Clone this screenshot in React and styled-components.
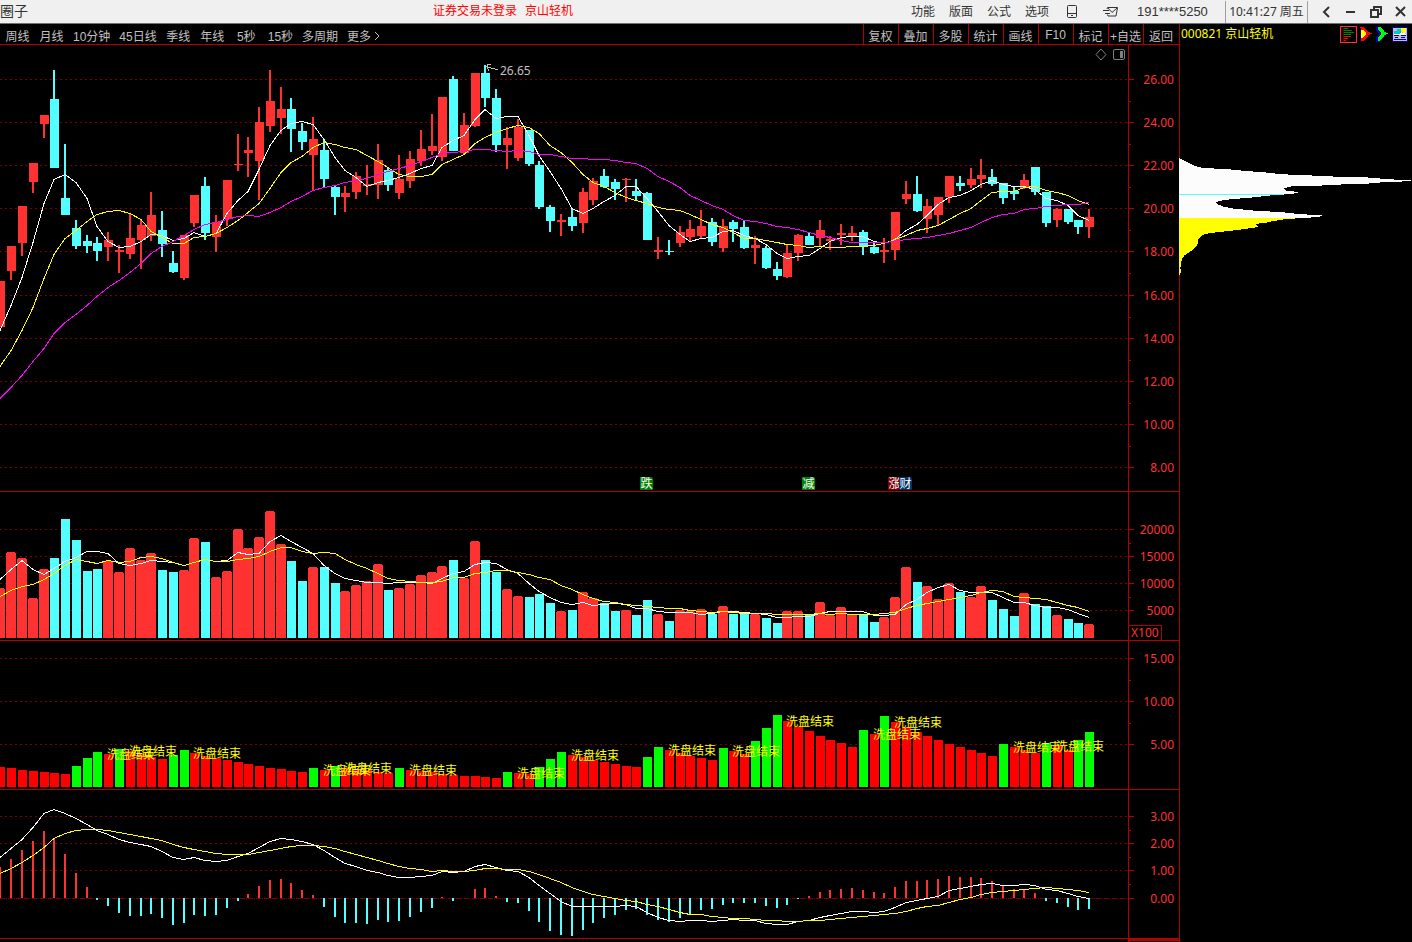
import React from "react";
import styled, { createGlobalStyle } from "styled-components";

const GlobalStyle = createGlobalStyle`
  * {
    box-sizing: border-box;
  }
  body {
    margin: 0;
    background: #000;
    font-family: "Noto Sans", "Noto Sans CJK SC", sans-serif;
    font-size: 12px;
  }
  button {
    margin: 0;
    padding: 0;
    border: 0;
    background: none;
    color: inherit;
    font: inherit;
    white-space: nowrap;
    cursor: pointer;
  }
`;

const Page = styled.div`
  display: flex;
  flex-direction: column;
  height: 100vh;
  min-height: 600px;
  overflow: hidden;
`;
const TitleBar = styled.header`
  display: grid;
  grid-template-columns: 1fr auto 1fr;
  flex: none;
  height: 24px;
  line-height: 22px;
  color: #333;
  background: #f0f0f0;
  border-bottom: 1px solid #707070;
`;
const AppName = styled.span`
  font-size: 14px;
`;
const LoginState = styled.span`
  display: flex;
  gap: 8px;
  margin-right: 338px;
  color: #ff0000;
`;
const TitleRight = styled.div`
  display: flex;
  justify-content: flex-end;
  align-items: center;
`;
const Menu = styled.nav`
  display: flex;
  align-items: center;
  gap: 14px;
  svg {
    display: block;
  }
`;
const MenuIcons = styled.div`
  display: flex;
  align-items: center;
  gap: 26px;
  margin: 0 19px 0 18px;
`;
const Account = styled.span`
  width: 88px;
  font-family: "Liberation Sans", sans-serif;
  font-size: 13px;
`;
const Clock = styled.time`
  width: 83px;
  height: 22px;
  text-align: center;
  white-space: nowrap;
  border-left: 1px solid #a0a0a0;
  border-right: 1px solid #a0a0a0;
`;
const WindowButtons = styled.div`
  display: flex;
  gap: 9px;
  padding: 0 3px 0 10px;
  button {
    width: 16px;
    height: 16px;
  }
  svg {
    display: block;
  }
`;

const Body = styled.div`
  display: grid;
  grid-template-columns: minmax(0, 1fr) 233px;
  flex: 1;
  min-height: 0;
`;
const Main = styled.main`
  display: flex;
  flex-direction: column;
  min-width: 0;
  min-height: 0;
`;
const Toolbar = styled.div`
  display: flex;
  justify-content: space-between;
  flex: none;
  height: 21px;
  color: #c0c0c0;
  font-family: "Liberation Sans", "Noto Sans CJK SC", sans-serif;
  border-bottom: 1px solid #b00000;
`;
const Periods = styled.div`
  display: flex;
  gap: 9px;
  padding-left: 5px;
  button {
    min-width: 25px;
    padding-top: 2px;
  }
`;
const Tools = styled.div`
  display: flex;
  button {
    width: 35px;
    padding: 2px 1px 0 0;
    border-left: 1px solid #b00000;
  }
  button:last-child {
    width: 36px;
  }
`;

const Charts = styled.div`
  display: grid;
  grid-template-rows: 447fr 149fr 149fr 149fr 3px;
  flex: 1;
  min-height: 0;
`;
const Panel = styled.section`
  display: grid;
  grid-template-columns: minmax(0, 1fr) 51px;
  min-height: 0;
  border-bottom: 1px solid #b00000;
`;
const PlotArea = styled.div`
  position: relative;
  min-width: 0;
  min-height: 0;
  overflow: hidden;
`;
const AxisArea = styled.div`
  position: relative;
  min-height: 0;
  color: #ff3232;
  border-left: 1px solid #b00000;
`;
const Canvas = styled.svg`
  position: absolute;
  inset: 0;
  display: block;
  width: 100%;
  height: 100%;
  shape-rendering: crispEdges;
`;
const AxisLabel = styled.span`
  position: absolute;
  right: 5px;
  line-height: 16px;
  margin-top: -8px;
`;
const Unit = styled.span`
  position: absolute;
  left: 0;
  bottom: 0;
  width: 33px;
  height: 15px;
  padding-left: 2px;
  line-height: 14px;
  border-top: 1px solid #b00000;
  border-right: 1px solid #b00000;
`;
const Signal = styled.span`
  position: absolute;
  margin-top: -7px;
  line-height: 16px;
  color: #ffff00;
  white-space: nowrap;
`;
const PeakLabel = styled(Signal)`
  margin-top: -8px;
  color: #c0c0c0;
`;
const EventMark = styled.span`
  position: absolute;
  bottom: 1px;
  width: 13px;
  height: 13px;
  margin-left: -7px;
  line-height: 14px;
  text-align: center;
  color: #fff;
  background: ${(props) => props.$color};
  border-top-right-radius: 2px;
`;
const PlotTools = styled.div`
  position: absolute;
  top: 3px;
  right: 3px;
  display: flex;
  gap: 6px;
  svg {
    display: block;
  }
`;
const Foot = styled.div`
  display: grid;
  grid-template-columns: minmax(0, 1fr) 51px;
  div {
    border-left: 2px solid #b00000;
    border-top: 2px solid #b00000;
  }
`;

const Side = styled.aside`
  display: flex;
  flex-direction: column;
  min-height: 0;
  color: #ffff00;
  box-shadow: inset 1px 0 #b00000;
`;
const SideHead = styled.div`
  display: flex;
  justify-content: space-between;
  flex: none;
  height: 21px;
  padding: 0 4px 0 2px;
  line-height: 19px;
`;
const Stock = styled.span`
  display: flex;
  gap: 3px;
  white-space: nowrap;
`;
const SideIcons = styled.div`
  display: flex;
  align-items: center;
  gap: 3px;
  svg {
    display: block;
  }
`;
const Chips = styled.svg`
  display: block;
  width: 100%;
  height: 130px;
  margin-top: 105px;
  shape-rendering: crispEdges;
`;

const RED = "#ff3232";
const CYAN = "#54ffff";
const WIDTH = 1128;

const barX = (i) => Math.round(10.78 * i - 3.6);
const pct = (value, total) => `${(value / total) * 100}%`;

// high, body top, body bottom, low, 1 = rising
const candles = [
  [281, 281, 327, 327, 1], [246, 246, 271, 280, 1], [206, 206, 243, 256, 1],
  [163, 163, 182, 193, 1], [115, 115, 124, 138, 1], [70, 99, 168, 168, 0],
  [144, 198, 215, 215, 0], [220, 228, 246, 249, 0], [235, 241, 246, 253, 0],
  [237, 243, 251, 261, 0], [232, 240, 247, 261, 1], [245, 250, 252, 273, 1],
  [213, 238, 254, 259, 1], [219, 225, 240, 269, 1], [192, 215, 236, 241, 1],
  [211, 230, 244, 257, 0], [251, 263, 272, 273, 0], [235, 235, 278, 280, 1],
  [195, 195, 223, 227, 1], [177, 186, 233, 240, 0], [215, 222, 237, 252, 1],
  [180, 180, 219, 226, 1], [134, 164, 165, 171, 1], [137, 150, 153, 177, 1],
  [107, 122, 161, 200, 1], [70, 101, 126, 132, 1], [87, 109, 118, 134, 1],
  [98, 109, 129, 152, 0], [123, 131, 142, 150, 0], [117, 139, 155, 191, 1],
  [140, 150, 179, 187, 0], [185, 187, 197, 215, 0], [186, 193, 197, 212, 1],
  [172, 176, 192, 199, 1], [165, 184, 186, 195, 1], [144, 160, 185, 199, 1],
  [167, 170, 185, 191, 0], [155, 179, 193, 199, 1], [151, 159, 181, 188, 1],
  [130, 149, 161, 166, 1], [114, 146, 151, 155, 1], [97, 97, 157, 161, 1],
  [76, 79, 151, 151, 0], [113, 125, 153, 154, 1], [73, 73, 126, 127, 1],
  [65, 73, 98, 107, 0], [89, 98, 145, 152, 0], [127, 138, 145, 169, 1],
  [119, 127, 158, 161, 1], [130, 130, 164, 166, 0], [161, 165, 207, 209, 0],
  [205, 207, 221, 232, 0], [214, 220, 222, 236, 1], [208, 217, 226, 231, 0],
  [188, 192, 223, 233, 1], [178, 181, 200, 205, 1], [169, 176, 187, 188, 0],
  [179, 182, 189, 200, 0], [178, 179, 180, 202, 1], [179, 191, 196, 200, 0],
  [192, 193, 240, 240, 0], [237, 250, 252, 259, 1], [240, 251, 252, 255, 0],
  [226, 232, 243, 247, 1], [220, 229, 237, 241, 1], [210, 226, 236, 238, 1],
  [218, 222, 242, 246, 0], [219, 226, 248, 252, 1], [220, 222, 229, 242, 0],
  [221, 227, 248, 249, 0], [236, 245, 248, 264, 1], [246, 248, 268, 269, 0],
  [262, 269, 276, 280, 0], [245, 253, 277, 278, 1], [234, 235, 253, 261, 1],
  [233, 236, 245, 245, 0], [220, 230, 238, 247, 1], [236, 239, 241, 250, 1],
  [224, 233, 235, 245, 1], [226, 233, 236, 241, 1], [230, 232, 247, 255, 0],
  [243, 247, 253, 254, 0], [238, 250, 252, 263, 1], [212, 212, 250, 260, 1],
  [181, 194, 199, 204, 1], [176, 194, 211, 212, 0], [199, 206, 219, 233, 1],
  [197, 197, 215, 225, 1], [176, 176, 197, 203, 1], [176, 183, 186, 191, 0],
  [168, 179, 185, 188, 1], [159, 175, 179, 188, 1], [169, 177, 184, 186, 0],
  [183, 183, 198, 204, 0], [186, 191, 194, 200, 0], [174, 180, 188, 189, 1],
  [167, 167, 192, 195, 0], [192, 192, 223, 227, 0], [208, 209, 220, 227, 1],
  [209, 209, 222, 224, 0], [220, 220, 227, 234, 0], [209, 217, 227, 238, 1],
];

const ma5 = [
  330, 305, 277, 242, 203, 179, 174, 182, 198, 226, 241, 247, 246, 241, 234, 235, 240,
  238, 232, 236, 233, 213, 200, 191, 169, 145, 130, 123, 121, 124, 139, 157, 170, 177,
  186, 182, 180, 177, 173, 168, 165, 147, 140, 135, 119, 109, 118, 116, 116, 135, 155,
  171, 188, 208, 213, 208, 201, 195, 186, 186, 198, 211, 225, 234, 241, 238, 237, 231,
  230, 235, 238, 244, 253, 258, 256, 255, 248, 241, 237, 236, 236, 241, 243, 239, 230,
  224, 215, 204, 197, 195, 190, 184, 180, 184, 186, 186, 189, 198, 200, 205, 215, 220,
];
const ma10 = [
  366, 350, 330, 307, 278, 254, 238, 230, 221, 214, 211, 210, 213, 219, 231, 237, 243,
  243, 237, 236, 233, 227, 220, 212, 203, 188, 172, 162, 156, 147, 142, 144, 147, 149,
  155, 161, 167, 174, 176, 176, 174, 164, 159, 154, 143, 137, 132, 128, 125, 127, 133,
  145, 152, 162, 174, 182, 186, 192, 197, 200, 203, 207, 209, 210, 214, 219, 224, 227,
  232, 238, 238, 240, 242, 244, 245, 247, 246, 247, 247, 246, 246, 245, 243, 239, 235,
  230, 228, 225, 219, 213, 208, 200, 192, 191, 191, 187, 186, 190, 192, 195, 200, 204,
];
const ma20 = [
  398, 387, 375, 361, 348, 333, 322, 314, 305, 296, 287, 280, 272, 263, 253, 246, 241,
  235, 229, 224, 222, 219, 216, 215, 216, 212, 207, 201, 196, 190, 187, 185, 182, 180,
  178, 174, 171, 168, 165, 161, 157, 153, 152, 151, 149, 149, 150, 151, 150, 151, 154,
  154, 156, 158, 158, 159, 159, 160, 162, 163, 168, 176, 181, 187, 195, 200, 205, 209,
  215, 220, 221, 223, 226, 227, 229, 232, 235, 237, 240, 242, 242, 242, 242, 241, 239,
  238, 237, 235, 233, 230, 227, 222, 217, 214, 213, 209, 208, 206, 205, 204, 204, 202,
];

const volumes = [
  588, 552, 558, 598, 569, 558, 519, 540, 571, 569, 561, 572, 548, 560, 553, 570, 572,
  570, 538, 542, 577, 571, 529, 548, 537, 511, 544, 561, 581, 567, 567, 583, 591, 585,
  581, 564, 590, 588, 584, 575, 572, 566, 560, 578, 541, 560, 572, 589, 596, 597, 594,
  603, 611, 610, 592, 598, 603, 611, 610, 615, 600, 614, 621, 610, 611, 609, 614, 606,
  614, 614, 614, 618, 623, 611, 611, 614, 602, 615, 607, 614, 615, 622, 617, 597, 567,
  582, 586, 599, 583, 592, 597, 586, 600, 609, 616, 593, 604, 606, 615, 619, 623, 624,
];
const volMa5 = [
  579, 569, 560, 569, 574, 568, 561, 557, 551, 551, 553, 563, 565, 563, 560, 561, 562,
  565, 562, 559, 561, 560, 552, 554, 553, 541, 535, 541, 547, 553, 565, 573, 578, 580,
  582, 582, 583, 582, 582, 582, 583, 578, 573, 571, 564, 562, 563, 569, 573, 583, 591,
  597, 602, 604, 602, 605, 604, 603, 604, 608, 608, 611, 612, 612, 612, 614, 613, 611,
  611, 612, 613, 614, 617, 617, 616, 616, 613, 611, 611, 611, 611, 615, 615, 614, 604,
  599, 592, 587, 584, 590, 592, 592, 592, 597, 602, 602, 605, 607, 607, 609, 613, 617,
];
const volMa10 = [
  596, 590, 586, 584, 579, 573, 565, 559, 561, 563, 560, 562, 561, 557, 556, 558, 562,
  565, 562, 559, 561, 561, 559, 558, 556, 551, 547, 547, 551, 553, 552, 553, 559, 564,
  568, 573, 578, 580, 581, 582, 582, 581, 577, 577, 573, 572, 570, 570, 572, 574, 577,
  579, 585, 589, 594, 598, 601, 602, 604, 605, 606, 607, 608, 608, 610, 611, 612, 611,
  612, 613, 613, 613, 614, 614, 614, 614, 613, 614, 613, 614, 614, 614, 613, 612, 608,
  605, 603, 601, 599, 597, 595, 592, 590, 591, 596, 597, 598, 599, 602, 605, 607, 611,
];

const strength = [
  767, 768, 770, 771, 772, 773, 774, 766, 758, 752, 754, 749, 751, 754, 757, 759, 755,
  750, 753, 756, 758, 760, 762, 764, 766, 768, 769, 771, 772, 768, 770, 766, 768, 770,
  770, 772, 773, 768, 770, 771, 772, 774, 775, 776, 776, 777, 778, 772, 773, 774, 767,
  759, 752, 755, 757, 760, 762, 764, 766, 767, 757, 747, 750, 753, 756, 758, 760, 748,
  751, 754, 741, 728, 715, 721, 727, 731, 736, 740, 743, 747, 730, 734, 716, 722, 727,
  732, 736, 740, 744, 747, 750, 753, 756, 744, 747, 750, 753, 743, 746, 750, 740, 732,
];
const greenBars = [
  7, 8, 9, 11, 16, 17, 29, 31, 37, 47, 50, 51, 52, 60, 61, 67, 70, 71, 72, 80, 82, 93,
  97, 100, 101,
];
const signals = [10, 12, 18, 30, 32, 38, 48, 53, 62, 68, 73, 81, 83, 94, 98];

const ZERO = 898;
const macd = [
  867, 859, 850, 841, 831, 838, 854, 873, 887, 900, 906, 913, 916, 916, 914, 918, 925,
  923, 915, 916, 915, 908, 901, 894, 886, 880, 879, 883, 890, 895, 907, 917, 923, 923,
  924, 920, 922, 921, 917, 912, 908, 897, 901, 898, 889, 888, 896, 902, 903, 911, 922,
  931, 935, 936, 930, 923, 918, 915, 910, 909, 915, 920, 922, 918, 914, 910, 909, 905,
  903, 903, 903, 906, 908, 905, 899, 896, 892, 890, 889, 888, 890, 892, 893, 887, 881,
  881, 880, 879, 876, 877, 877, 878, 881, 886, 889, 890, 893, 901, 903, 907, 910, 909,
];
const dif = [
  857, 848, 839, 827, 813, 809, 813, 818, 824, 830, 834, 839, 842, 844, 846, 851, 857,
  859, 857, 860, 861, 860, 856, 853, 847, 841, 838, 839, 841, 844, 850, 857, 863, 866,
  870, 872, 875, 877, 877, 876, 875, 871, 872, 871, 866, 864, 867, 870, 871, 877, 885,
  893, 901, 906, 906, 906, 906, 906, 905, 906, 912, 917, 920, 921, 920, 920, 921, 920,
  919, 920, 920, 923, 924, 924, 921, 920, 917, 915, 913, 911, 911, 912, 911, 907, 902,
  900, 898, 896, 890, 888, 886, 884, 883, 885, 885, 884, 885, 889, 890, 893, 896, 898,
];
const dea = [
  873, 868, 862, 855, 847, 838, 833, 830, 829, 829, 830, 832, 834, 836, 838, 840, 844,
  847, 849, 851, 853, 854, 854, 854, 852, 850, 848, 846, 845, 845, 846, 848, 851, 854,
  857, 860, 863, 866, 868, 869, 871, 870, 871, 871, 870, 868, 868, 869, 869, 871, 874,
  878, 882, 887, 891, 894, 896, 898, 900, 901, 904, 906, 909, 912, 914, 914, 916, 917,
  918, 918, 919, 920, 920, 921, 921, 920, 920, 919, 918, 917, 916, 915, 914, 913, 911,
  908, 906, 905, 902, 899, 897, 894, 892, 891, 890, 889, 888, 887, 888, 889, 890, 892,
];

const periods = ["周线", "月线", "10分钟", "45日线", "季线", "年线", "5秒", "15秒", "多周期"];
const tools = ["复权", "叠加", "多股", "统计", "画线", "F10", "标记", "+自选", "返回"];
const menu = ["功能", "版面", "公式", "选项"];

const priceTicks = [
  [79, "26.00"], [122, "24.00"], [165, "22.00"], [208, "20.00"], [251, "18.00"],
  [295, "16.00"], [338, "14.00"], [381, "12.00"], [424, "10.00"], [467, "8.00"],
];
const volumeTicks = [[529, "20000"], [556, "15000"], [583, "10000"], [610, "5000"]];
const strengthTicks = [[658, "15.00"], [701, "10.00"], [744, "5.00"]];
const macdTicks = [[816, "3.00"], [843, "2.00"], [870, "1.00"], [898, "0.00"]];

const events = [
  { at: 60, text: "跌", color: "#008000" },
  { at: 75, text: "减", color: "#008000" },
  { at: 83, text: "涨", color: "#800000" },
  { at: 84, text: "财", color: "#003468" },
];

const Line = ({ data, color }) => (
  <polyline
    points={data.map((y, i) => `${barX(i) + 4},${y + 0.5}`).join(" ")}
    fill="none"
    stroke={color}
  />
);

const Chart = ({ name, top, height, ticks, children, overlay, unit }) => {
  const minor = ticks.slice(1).map(([y], i) => Math.round((y + ticks[i][0]) / 2));
  return (
    <Panel aria-label={name}>
      <PlotArea>
        <Canvas viewBox={`0 ${top} ${WIDTH} ${height}`} preserveAspectRatio="none">
          {ticks.map(([y, text]) => (
            <line
              key={y}
              x1="0"
              x2={WIDTH}
              y1={y + 0.5}
              y2={y + 0.5}
              stroke="#800000"
              strokeDasharray={text === "0.00" ? "5 1 1 1" : "2 3"}
            />
          ))}
          {children}
        </Canvas>
        {overlay}
      </PlotArea>
      <AxisArea>
        <Canvas viewBox={`0 ${top} 50 ${height}`} preserveAspectRatio="none">
          {ticks.map(([y]) => (
            <rect key={y} x="0" y={y} width="5" height="1" fill="#b00000" />
          ))}
          {minor.map((y) => (
            <rect key={y} x="0" y={y} width="2" height="1" fill="#b00000" />
          ))}
        </Canvas>
        {ticks.map(([y, text]) => (
          <AxisLabel key={y} style={{ top: pct(y - top + 1, height) }}>
            {text}
          </AxisLabel>
        ))}
        {unit && <Unit>{unit}</Unit>}
      </AxisArea>
    </Panel>
  );
};

const PriceChart = () => (
  <Chart
    name="K线"
    top={45}
    height={446}
    ticks={priceTicks}
    overlay={
      <>
        <PeakLabel style={{ left: pct(500, WIDTH), top: pct(26, 446) }}>26.65</PeakLabel>
        {events.map((e) => (
          <EventMark key={e.at} $color={e.color} style={{ left: pct(barX(e.at) + 4, WIDTH) }}>
            {e.text}
          </EventMark>
        ))}
        <PlotTools>
          <button aria-label="标记点">
            <svg width="12" height="12" viewBox="0 0 12 12" fill="none" stroke="#808080">
              <path d="M6 1L11 6.500L6 12L1 6.500Z" />
            </svg>
          </button>
          <button aria-label="侧栏">
            <svg width="12" height="12" viewBox="0 0 12 12" fill="none" stroke="#808080">
              <rect x="0.500" y="1.500" width="11" height="10" rx="1.500" />
              <rect x="7" y="3" width="3" height="7" fill="#808080" stroke="none" />
            </svg>
          </button>
        </PlotTools>
      </>
    }
  >
    {candles.map(([high, bodyTop, bodyBottom, low, up], i) => (
      <g key={i} fill={up ? RED : CYAN}>
        <rect x={barX(i) + 3} y={high} width="2" height={low - high} />
        <rect x={barX(i)} y={bodyTop} width="9" height={bodyBottom - bodyTop} />
      </g>
    ))}
    <Line data={ma5} color="#fff" />
    <Line data={ma10} color="#ffff00" />
    <Line data={ma20} color="#ff00ff" />
    <path d="M498 70L486 66.500M491 64.500H487V67L489 71" fill="none" stroke="#c0c0c0" />
  </Chart>
);

const VolumeChart = () => (
  <Chart name="成交量" top={492} height={148} ticks={volumeTicks} unit="X100">
    {volumes.map((y, i) =>
      candles[i][4] ? (
        <path
          key={i}
          d={`M${barX(i) - 1} 638V${y + 1}h1v-1h8v1h1V638Z`}
          fill={RED}
        />
      ) : (
        <rect key={i} x={barX(i)} y={y} width="9" height={638 - y} fill={CYAN} />
      )
    )}
    <Line data={volMa5} color="#fff" />
    <Line data={volMa10} color="#ffff00" />
  </Chart>
);

const StrengthChart = () => (
  <Chart
    name="洗盘"
    top={641}
    height={148}
    ticks={strengthTicks}
    overlay={signals.map((i) => (
      <Signal
        key={i}
        style={{ left: pct(barX(i) + 3, WIDTH), top: pct(strength[i] - 641, 148) }}
      >
        洗盘结束
      </Signal>
    ))}
  >
    {strength.map((y, i) => (
      <rect
        key={i}
        x={barX(i)}
        y={y}
        width="9"
        height={787 - y}
        fill={greenBars.includes(i) ? "#00ff00" : "#ff0000"}
      />
    ))}
  </Chart>
);

const MacdChart = () => (
  <Chart name="MACD" top={790} height={148} ticks={macdTicks}>
    {macd.map((y, i) => (
      <rect
        key={i}
        x={barX(i) + 3}
        y={Math.min(y, ZERO)}
        width="2"
        height={Math.abs(y - ZERO)}
        fill={y < ZERO ? RED : CYAN}
      />
    ))}
    <Line data={dif} color="#fff" />
    <Line data={dea} color="#ffff00" />
  </Chart>
);

// cost distribution, drawn at three units per pixel
const ChipChart = () => (
  <Chips viewBox="27 0 699 390" preserveAspectRatio="none">
    <polygon
      fill="#fcfcfc"
      points="27,24 33,27 45,33 57,39 66,44 80,49 97,54 123,55 176,58 230,63 284,67 318,71 360,74 440,77 498,80 611,83 633,86 678,89 723,90 723,93 687,95 620,98 593,101 524,103 447,107 365,109 348,113 342,116 345,121 362,123 384,126 384,129 370,131 338,134 293,137 271,140 230,144 190,147 163,150 150,153 138,157 140,161 150,166 165,171 185,175 213,178 241,181 288,184 333,186 354,189 390,192 416,194 456,195 456,198 444,201 416,203 393,205 27,205"
    />
    <polygon
      fill="#ffff00"
      points="27,204 393,204 342,208 310,213 285,219 260,221 255,225 264,228 264,231 247,234 222,237 203,240 175,243 130,248 110,251 97,255 91,261 85,268 84,278 78,291 70,299 55,308 42,317 35,330 33,345 30,355 33,361 30,375 27,375"
    />
    <rect x="27" y="132" width="312" height="3" fill={CYAN} />
  </Chips>
);

const App = () => (
  <>
    <GlobalStyle />
    <Page>
      <TitleBar>
        <AppName>圈子</AppName>
        <LoginState>
          <span>证券交易未登录</span>
          <span>京山轻机</span>
        </LoginState>
        <TitleRight>
          <Menu>
            {menu.map((item) => (
              <button key={item}>{item}</button>
            ))}
          </Menu>
          <MenuIcons>
            <svg width="10" height="14" viewBox="0 0 10 14" fill="none" stroke="#333">
              <rect x="0.500" y="0.500" width="9" height="12" rx="1" />
              <path d="M1 8.500H9M4 10.500H6" />
            </svg>
            <svg width="15" height="10" viewBox="0 0 15 10" fill="none" stroke="#333">
              <path d="M4 2L4.500 0.500H14.500L13 9H5L4.500 7.500M5 1L9 5.500L14 1M0 3.500H6M2 6.500H7" />
            </svg>
          </MenuIcons>
          <Account>191****5250</Account>
          <Clock>10:41:27 周五</Clock>
          <WindowButtons>
            <button aria-label="后退">
              <svg width="16" height="16" viewBox="0 0 16 16" fill="none" stroke="#333" strokeWidth="2">
                <path d="M11 3L6 8L11 13" />
              </svg>
            </button>
            <button aria-label="最小化">
              <svg width="16" height="16" viewBox="0 0 16 16" fill="none" stroke="#333" strokeWidth="2">
                <path d="M3 8H12" />
              </svg>
            </button>
            <button aria-label="还原">
              <svg width="16" height="16" viewBox="0 0 16 16" fill="none" stroke="#333" strokeWidth="2">
                <path d="M3 6H10V13H3ZM6 5V3H13V10H11" />
              </svg>
            </button>
            <button aria-label="关闭">
              <svg width="16" height="16" viewBox="0 0 16 16" fill="none" stroke="#333" strokeWidth="2">
                <path d="M3 3L12 12M12 3L3 12" />
              </svg>
            </button>
          </WindowButtons>
        </TitleRight>
      </TitleBar>
      <Body>
        <Main>
          <Toolbar>
            <Periods>
              {periods.map((item) => (
                <button key={item}>{item}</button>
              ))}
              <button>
                更多{" "}
                <svg width="6" height="10" viewBox="0 0 6 10" fill="none" stroke="#c0c0c0">
                  <path d="M1 1L5 5L1 9" />
                </svg>
              </button>
            </Periods>
            <Tools>
              {tools.map((item) => (
                <button key={item}>{item}</button>
              ))}
            </Tools>
          </Toolbar>
          <Charts>
            <PriceChart />
            <VolumeChart />
            <StrengthChart />
            <MacdChart />
            <Foot>
              <span />
              <div />
            </Foot>
          </Charts>
        </Main>
        <Side>
          <SideHead>
            <Stock>
              <span>000821</span>
              <span>京山轻机</span>
            </Stock>
            <SideIcons>
              <svg width="17" height="17" viewBox="0 0 17 17" shapeRendering="crispEdges">
                <rect x="0.500" y="0.500" width="16" height="16" fill="none" stroke={RED} />
                <path d="M4 2.500H8M4 4.500H12M4 6.500H14M4 8.500H11" stroke="#008000" />
                <path d="M4 10.500H11M4 12.500H8M4 14.500H6" stroke="#ff0000" />
                <path d="M3.500 2V16" stroke="#600000" />
              </svg>
              <svg width="13" height="15" viewBox="0 0 13 15" shapeRendering="crispEdges">
                <path d="M0 1V15L4 11V4Z" fill="#0000a8" />
                <path d="M0 0H3L8 4V5L12 6V7L8 8V9L3 14H1V11L3 7Z" fill="#ff0000" />
                <path d="M1 3H3L6 6V7L2 11H1Z" fill="#ffff00" />
              </svg>
              <svg width="13" height="15" viewBox="0 0 13 15" shapeRendering="crispEdges">
                <path d="M0 0H4L9 5V9L4 15H0V11L3 7L0 4Z" fill="#0000c8" />
                <path d="M2 0H4L8 4V5L12 6V7L8 8V9L4 14H2V10L5 7V6L2 3Z" fill="#00ff00" />
              </svg>
              <svg width="16" height="15" viewBox="0 0 16 15" shapeRendering="crispEdges">
                <rect width="16" height="15" fill="#0000a8" />
                <rect x="1" y="1" width="14" height="13" fill="#c0c0c0" />
                <path d="M2 4H5V2H9V7H2Z" fill="#00c8c8" />
                <path d="M9 1H14V6H11L9 4Z" fill="#ffff00" />
                <path d="M2 7H7L9 5L14 7V8H2Z" fill="#fff" />
                <path d="M2 8.500H7M9 8.500H14M3 10.500H6M9 10.500H13M2 12.500H14" stroke="#0000a8" />
              </svg>
            </SideIcons>
          </SideHead>
          <ChipChart />
        </Side>
      </Body>
    </Page>
  </>
);

export default App;
